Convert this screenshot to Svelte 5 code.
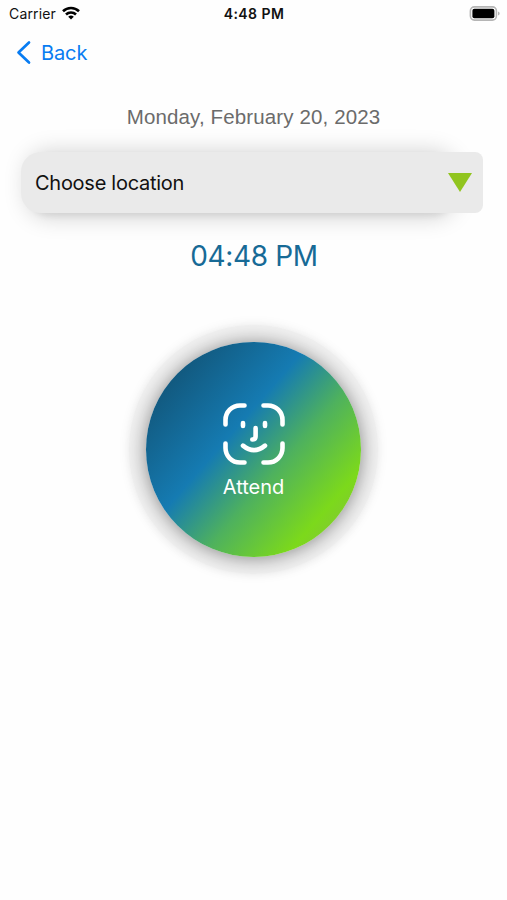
<script lang="ts">
  export let carrier: string = "Carrier";
  export let clock: string = "4:48 PM";
  export let date: string = "Monday, February 20, 2023";
  export let time: string = "04:48 PM";
  export let location: string = "Choose location";
</script>

<main class="screen">
  <header class="status-bar">
    <div class="status-left">
      <span class="carrier">{carrier}</span>
      <svg class="wifi" width="18" height="14" viewBox="0 0 18 14" fill="none" stroke="#000" stroke-width="2.6">
        <path d="M1 5.2a11.5 11.5 0 0 1 16 0" />
        <path d="M4 8.5a7.2 7.2 0 0 1 10 0" />
        <path d="M9 13.6 6.2 10.8a4 4 0 0 1 5.6 0z" fill="#000" stroke="none" />
      </svg>
    </div>
    <span class="clock">{clock}</span>
    <svg class="battery" width="31" height="15" viewBox="0 0 31 15">
      <rect x="1.4" y="0.9" width="26" height="13.2" rx="4" fill="#fff" stroke="#b5b5b5" stroke-width="1.6" />
      <rect x="3.4" y="2.8" width="22" height="9.4" rx="2" fill="#000" />
      <path d="M29 5.4v4.2q1.7-.6 1.7-2.1t-1.7-2.1z" fill="#b5b5b5" />
    </svg>
  </header>

  <nav class="nav-bar">
    <button class="back">
      <svg width="16" height="26" viewBox="0 0 16 26" fill="none" stroke="#087cf2" stroke-width="2.7" stroke-linecap="round" stroke-linejoin="round">
        <path d="M14 2.5 3.5 12.5 14 22.5" />
      </svg>
      <span class="back-label">Back</span>
    </button>
  </nav>

  <p class="date">{date}</p>

  <button class="select">
    <span class="select-label">{location}</span>
    <svg class="arrow" width="24" height="19" viewBox="0 0 24 19">
      <path d="M0 0h24L12 19z" fill="#91c51f" />
    </svg>
  </button>

  <p class="time">{time}</p>

  <button class="attend">
    <svg width="62" height="62" viewBox="0 0 62 62" fill="none" stroke="#fff" stroke-width="4.6" stroke-linecap="round">
      <path d="M2.5 21.5V17A14.5 14.5 0 0 1 17 2.5h4.5" />
      <path d="M40.5 2.5H45A14.5 14.5 0 0 1 59.5 17v4.5" />
      <path d="M59.5 40.5V45A14.5 14.5 0 0 1 45 59.5h-4.5" />
      <path d="M21.5 59.5H17A14.5 14.5 0 0 1 2.5 45v-4.5" />
      <path d="M20 20v3M42 20v3" />
      <path d="M32.6 25v8.2q0 3.3-3.3 3.3" />
      <path d="M20 42.6q11 9 22 0" />
    </svg>
    <span class="attend-label">Attend</span>
  </button>
</main>

<style>
  :global(body) {
    margin: 0;
    background: #fff;
  }

  .screen {
    display: flex;
    flex-direction: column;
    align-items: center;
    box-sizing: border-box;
    width: 507px;
    height: 900px;
    overflow: hidden;
    background: #fefefe;
    font-family: Inter, "Liberation Sans", sans-serif;
    white-space: nowrap;
  }

  button {
    margin: 0;
    padding: 0;
    border: none;
    background: none;
    font-family: inherit;
    cursor: pointer;
  }

  svg {
    display: block;
    flex-shrink: 0;
  }

  .status-bar {
    display: grid;
    grid-template-columns: 1fr auto 1fr;
    align-items: center;
    box-sizing: border-box;
    width: 100%;
    height: 27px;
    padding: 0 7px 0 9px;
    color: #111;
  }

  .status-left {
    display: flex;
    align-items: center;
    gap: 6px;
  }

  .wifi {
    margin-top: -2px;
  }

  .carrier {
    font-size: 14px;
    letter-spacing: 0.15px;
  }

  .clock {
    margin-right: 1px;
    font-size: 14px;
    font-weight: 600;
    letter-spacing: 0.45px;
  }

  .battery {
    justify-self: end;
  }

  .nav-bar {
    display: flex;
    align-items: center;
    width: 100%;
    height: 50px;
  }

  .back {
    display: flex;
    align-items: center;
    gap: 10px;
    margin: 1px 0 0 15px;
    color: #087cf2;
    font-size: 20px;
    letter-spacing: -0.1px;
  }

  .date {
    margin: 28px 0 0;
    color: #6b6b6b;
    font-family: "Liberation Sans", Arial, sans-serif;
    font-size: 20.5px;
    line-height: 24px;
    letter-spacing: 0.13px;
  }

  .select {
    position: relative;
    isolation: isolate;
    display: flex;
    align-items: center;
    justify-content: space-between;
    box-sizing: border-box;
    width: 462px;
    height: 61px;
    margin: 23px 0 0 -3px;
    padding: 0 11px 0 15px;
    border-radius: 20px 8px 8px 20px;
    color: #111;
    font-size: 20px;
    letter-spacing: -0.27px;
  }

  /* the shadow is narrower than the field itself */
  .select::before {
    content: "";
    position: absolute;
    z-index: -2;
    inset: 0 30px 0 8px;
    border-radius: 20px;
    box-shadow:
      0 2px 22px 3px rgba(0, 0, 0, 0.17),
      0 3px 6px rgba(0, 0, 0, 0.07);
  }

  .select::after {
    content: "";
    position: absolute;
    z-index: -1;
    inset: 0;
    border-radius: inherit;
    background: #eaeaea;
  }

  .select-label {
    margin: 1px 0 0 -1px;
  }

  .arrow {
    margin-top: -1px;
  }

  .time {
    margin: 25px 0 0 1px;
    color: #176a96;
    font-size: 28px;
    line-height: 36px;
    letter-spacing: -0.35px;
  }

  .attend {
    display: flex;
    flex-direction: column;
    align-items: center;
    justify-content: center;
    gap: 9px;
    width: 215px;
    height: 215px;
    margin: 68px 0 0;
    padding-top: 3px;
    box-sizing: border-box;
    border-radius: 50%;
    background: linear-gradient(131deg, #125a80 15%, #157bb2 41%, #4eb15e 60%, #7cd91b 81%, #82c736 90%);
    box-shadow:
      0 1px 19px rgba(0, 0, 0, 0.45),
      0 0 0 17px #f1f1f1,
      0 0 12px 17px rgba(0, 0, 0, 0.08);
    color: #fff;
    font-size: 20px;
  }

  .attend-label {
    line-height: 26px;
  }
</style>
